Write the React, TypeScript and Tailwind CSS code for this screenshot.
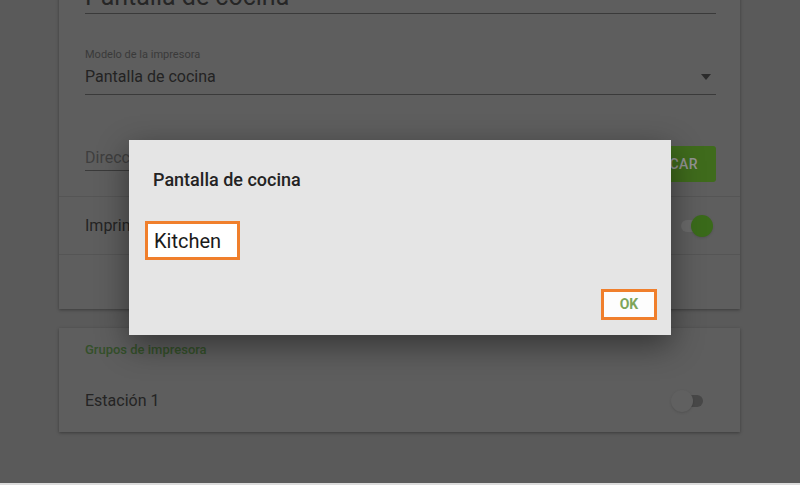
import React from 'react';

const Toggle: React.FC<{ on?: boolean }> = ({ on }) => (
  <div className="relative w-[34px] h-[22px] flex items-center">
    <div className={`w-[30px] h-[12px] rounded-full ml-[2px] ${on ? 'bg-[#6a6a6a]' : 'bg-[#474747]'}`} />
    <div
      className={`absolute top-0 w-[22px] h-[22px] rounded-full shadow ${
        on ? 'right-0 bg-[#3a6a1a]' : 'left-0 bg-[#606060]'
      }`}
    />
  </div>
);

export default function App() {
  return (
    <div
      className="relative w-[800px] h-[485px] overflow-hidden bg-[#5a5a5a]"
      style={{ fontFamily: 'Roboto, "Noto Sans", sans-serif' }}
    >
      <div className="flex flex-col gap-[19px] px-[59px] mt-[-28px]">
        {/* Tarjeta de la impresora */}
        <div className="w-[681px] bg-[#5e5e5e] shadow-[0_1px_3px_rgba(0,0,0,0.35)]">
          <div className="px-[26px] pr-[24px]">
            <div className="border-b border-[#3a3a3a] h-[42px] flex items-end pb-[4px]">
              <span className="text-[25px] leading-none text-[#262626]">Pantalla de cocina</span>
            </div>
            <div className="pt-[35px]">
              <div className="text-[11px] leading-none text-[#3a3a3a]">Modelo de la impresora</div>
              <div className="flex items-center justify-between border-b border-[#3a3a3a] h-[35px] pb-[1px]">
                <span className="text-[16px] text-[#232323]">Pantalla de cocina</span>
                <svg width="10" height="6" viewBox="0 0 10 6" className="mr-[5px]">
                  <path d="M0 0h10L5 6z" fill="#2b2b2b" />
                </svg>
              </div>
            </div>
            <div className="flex items-end gap-[24px] pt-[51px] pb-[14px]">
              <div className="flex-1 border-b border-[#3a3a3a] h-[25px] flex items-center mb-[11px]">
                <span className="text-[16px] text-[#3e3e3e]">Dirección IP</span>
              </div>
              <div className="w-[92px] h-[36px] rounded-[3px] bg-[#3f6b1c] flex items-center justify-center text-[14px] font-medium tracking-wide text-[#939393]">
                BUSCAR
              </div>
            </div>
          </div>
          <div className="border-t border-[#555] h-[58px] flex items-center justify-between pl-[26px] pr-[27px]">
            <span className="text-[16px] text-[#242424]">Imprimir automáticamente</span>
            <Toggle on />
          </div>
          <div className="border-t border-[#555] h-[55px]" />
        </div>

        {/* Grupos de impresora */}
        <div className="w-[681px] h-[104px] bg-[#5e5e5e] shadow-[0_1px_3px_rgba(0,0,0,0.35)] flex flex-col px-[26px] pr-[35px]">
          <div className="pt-[12px] text-[13px] font-medium text-[#34502a]">Grupos de impresora</div>
          <div className="flex items-center justify-between mt-[29px]">
            <span className="text-[16px] text-[#242424]">Estación 1</span>
            <Toggle />
          </div>
        </div>
      </div>

      <div className="absolute left-0 right-0 bottom-0 h-[2px] bg-[#dcdcdc]" />

      {/* Diálogo */}
      <div className="absolute left-[129px] top-[140px] w-[542px] h-[195px] bg-[#e5e5e5] shadow-[0_10px_30px_rgba(0,0,0,0.45)] flex flex-col">
        <div className="pl-[24px] pt-[31px] text-[18px] font-medium leading-none text-[#232323]">
          Pantalla de cocina
        </div>
        <div className="pl-[16px] pt-[32px]">
          <div className="w-[95px] h-[39px] border-[3px] border-[#f07f2c] bg-white flex items-center pl-[6px] text-[20px] text-[#1a1a1a]">
            Kitchen
          </div>
        </div>
        <div className="flex justify-end pr-[14px] pt-[29px]">
          <div className="w-[56px] h-[31px] border-[3px] border-[#f07f2c] bg-[#fdfdfd] flex items-center justify-center text-[14px] font-bold text-[#7ea55a]">
            OK
          </div>
        </div>
      </div>
    </div>
  );
}
